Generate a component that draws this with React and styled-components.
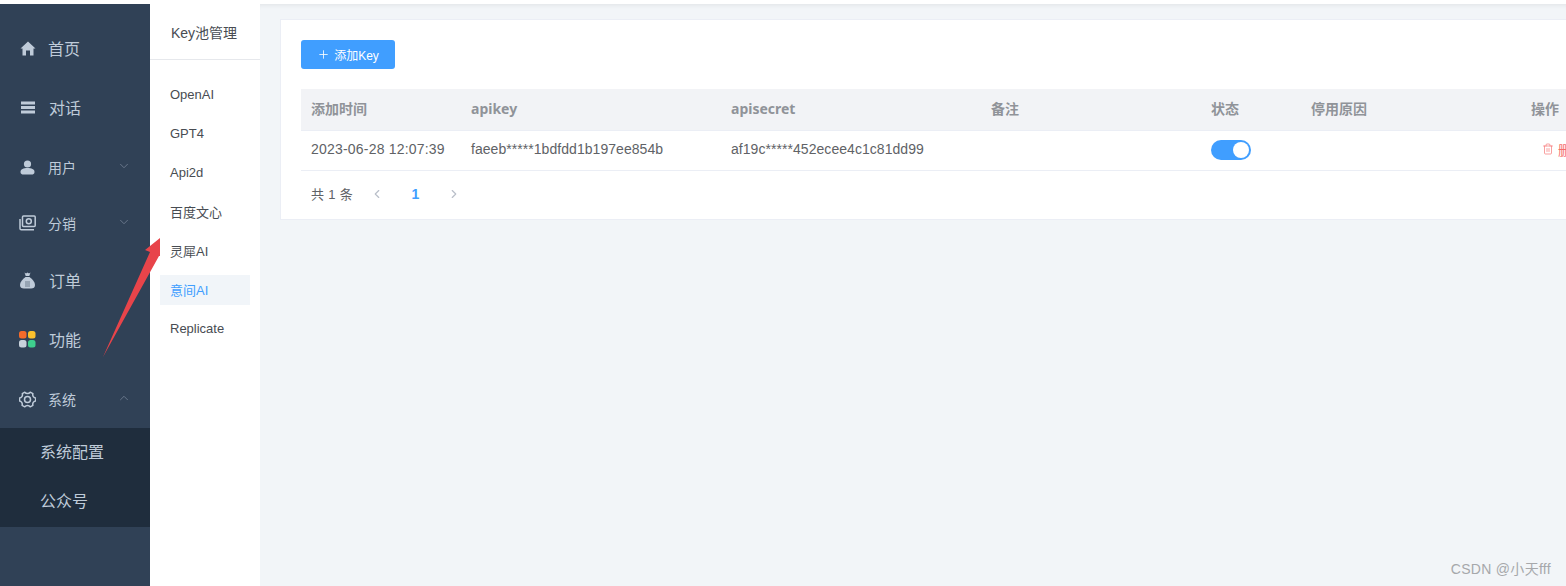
import React from 'react';
import styled, { createGlobalStyle } from 'styled-components';
import { Plus, ChevronLeft, ChevronRight, ChevronDown, ChevronUp, Trash2 } from 'lucide-react';

const GlobalStyle = createGlobalStyle`
  html, body {
    margin: 0;
    padding: 0;
    width: 1566px;
    height: 586px;
    overflow: hidden;
    background: #fff;
    font-family: "Liberation Sans", "Noto Sans CJK SC", sans-serif;
  }
  * { box-sizing: border-box; }
`;

const Page = styled.div`
  width: 1566px;
  height: 586px;
  padding-top: 4px;
  display: flex;
  position: relative;
  overflow: hidden;
  background: #fff;
`;

const Sidebar = styled.aside`
  width: 150px;
  flex-shrink: 0;
  padding-top: 14px;
  background: #304156;
  display: flex;
  flex-direction: column;
`;

const MenuRow = styled.div`
  height: ${({ $h }) => $h}px;
  padding: 0 0 ${({ $lift }) => $lift}px 19px;
  display: flex;
  align-items: center;
  color: #bfcbd9;
  font-size: ${({ $small }) => ($small ? 14 : 16)}px;
`;

const MenuIcon = styled.span`
  width: 17px;
  height: 17px;
  margin-right: ${({ $gap }) => $gap}px;
  display: flex;
  align-items: center;
  justify-content: center;
  flex-shrink: 0;
`;

const Caret = styled.span`
  margin-left: auto;
  margin-right: 19px;
  margin-top: -3px;
  display: flex;
  color: #6f7d90;
`;

const SubMenu = styled.div`
  background: #1f2d3d;
  display: flex;
  flex-direction: column;
`;

const SubRow = styled.div`
  height: 49.5px;
  padding: 0 0 4px 40px;
  display: flex;
  align-items: center;
  color: #bfcbd9;
  font-size: 16px;
`;

const Secondary = styled.nav`
  width: 110px;
  flex-shrink: 0;
  background: #fff;
`;

const SecondaryTitle = styled.div`
  height: 56px;
  padding-left: 21px;
  display: flex;
  align-items: center;
  color: #484c52;
  font-size: 14px;
  border-bottom: 1px solid #e6e8ec;
`;

const SecondaryList = styled.ul`
  list-style: none;
  margin: 0;
  padding: 20px 10px 0;
`;

const SecondaryItem = styled.li`
  height: 30px;
  margin-bottom: 9px;
  padding: 0 0 2px 10px;
  display: flex;
  align-items: center;
  font-size: 13px;
  color: ${({ $active }) => ($active ? '#409eff' : '#484c52')};
  background: ${({ $active }) => ($active ? '#f1f5f9' : 'transparent')};
`;

const Main = styled.main`
  flex: 1;
  min-width: 0;
  padding: 15px 0 0 20px;
  background: #f2f5f8;
  box-shadow: inset 0 5px 5px -4px rgba(0, 0, 0, 0.08);
`;

const Card = styled.section`
  width: 1500px;
  height: 201px;
  padding: 20px;
  background: #fff;
  border: 1px solid #ebeef5;
`;

const AddButton = styled.button`
  height: 29px;
  width: 94px;
  padding: 0;
  border: 0;
  border-radius: 3px;
  display: flex;
  align-items: center;
  justify-content: center;
  gap: 4px;
  background: #409eff;
  color: #fff;
  font-family: inherit;
  font-size: 12px;
`;

const Table = styled.table`
  margin-top: 20px;
  border-collapse: collapse;
  table-layout: fixed;
  width: 1460px;
`;

const HeadCell = styled.th`
  height: 41px;
  padding: 0 10px 2px;
  width: ${({ $w }) => $w}px;
  text-align: left;
  background: #f2f3f6;
  color: #909399;
  font-family: "Noto Sans", "Noto Sans CJK SC", sans-serif;
  font-size: 14px;
  font-weight: 700;
  border-bottom: 1px solid #ebeef5;
`;

const Cell = styled.td`
  height: 40px;
  padding: 0 10px 2px;
  color: #606266;
  font-size: 14px;
  letter-spacing: ${({ $spaced }) => ($spaced ? 0.2 : 0.05)}px;
  white-space: nowrap;
  overflow: hidden;
  border-bottom: 1px solid #ebeef5;
`;

const Switch = styled.span`
  width: 40px;
  height: 20px;
  padding: 2px;
  margin-top: 1px;
  border-radius: 10px;
  background: #409eff;
  display: flex;
  justify-content: flex-end;

  &:after {
    content: '';
    width: 16px;
    height: 16px;
    border-radius: 50%;
    background: #fff;
  }
`;

const DeleteLink = styled.span`
  margin-left: 11px;
  display: inline-flex;
  align-items: center;
  gap: 4px;
  color: #f56c6c;
  font-size: 13px;
`;

const Pager = styled.div`
  margin-top: 13px;
  display: flex;
  align-items: center;
  height: 20px;
  color: #606266;
  font-size: 13px;
  padding-left: 10px;
`;

const PagerTotal = styled.span`
  width: 59px;
  letter-spacing: 0.3px;
`;

const PagerArrow = styled.span`
  display: flex;
  color: #b9bfc9;
`;

const PagerNumber = styled.span`
  width: 63px;
  text-align: center;
  color: #409eff;
  font-size: 14px;
  font-weight: 700;
`;

const Watermark = styled.div`
  position: absolute;
  right: 15px;
  bottom: 8px;
  color: #a6a8ab;
  font-size: 14px;
  letter-spacing: 0.3px;
`;

const Arrow = styled.svg`
  position: absolute;
  left: 100px;
  top: 234px;
`;

const HomeIcon = () => (
  <svg width="16" height="15" viewBox="0 0 16 15">
    <path d="M8 0.5 L15.5 7.5 L13.5 7.5 L13.5 14.5 L10 14.5 L10 9.5 L6 9.5 L6 14.5 L2.5 14.5 L2.5 7.5 L0.5 7.5 Z" fill="#bfcbd9" />
  </svg>
);

const BarsIcon = () => (
  <svg width="14" height="13" viewBox="0 0 14 13">
    <path d="M0 0.5h14v3H0zM0 5h14v3H0zM0 9.5h14v3H0z" fill="#bfcbd9" />
  </svg>
);

const UserIcon = () => (
  <svg width="15" height="15" viewBox="0 0 15 15">
    <circle cx="7.5" cy="4" r="3.6" fill="#bfcbd9" />
    <path d="M0.5 12c0-3 3-4 7-4s7 1 7 4c0 2-1.5 2.5-3 2.5h-8c-1.500 0-3-.5-3-2.500z" fill="#bfcbd9" />
  </svg>
);

const CashIcon = () => (
  <svg width="17" height="16" viewBox="0 0 17 16" fill="none" stroke="#bfcbd9" strokeWidth="1.5">
    <rect x="3.500" y="1" width="12.700" height="10.500" rx="1" />
    <circle cx="9.800" cy="6.200" r="2.500" />
    <path d="M1 4v9.500c0 .8.500 1.300 1.300 1.300H15" />
  </svg>
);

const BagIcon = () => (
  <svg width="15" height="17" viewBox="0 0 15 17">
    <path d="M4.500 0.500l1.500 1 1.500-1 1.500 1 1.500-1-1.200 3.500H5.700z" fill="#bfcbd9" />
    <path d="M5.500 5h4c3 2 5.500 5 5.500 8 0 2.500-1.500 3.500-4 3.500H4c-2.500 0-4-1-4-3.500 0-3 2.500-6 5.500-8z" fill="#bfcbd9" />
    <path d="M5 10h5M5 12h5M5 14h5" stroke="#304156" strokeWidth="0.8" opacity="0.7" />
  </svg>
);

const TilesIcon = () => (
  <svg width="17" height="17" viewBox="0 0 17 17">
    <rect x="0" y="0" width="7.500" height="7.500" rx="2.500" fill="#f56b2a" />
    <rect x="9" y="0" width="7.500" height="7.500" rx="2.500" fill="#fbc02d" />
    <rect x="0" y="9" width="7.500" height="7.500" rx="2.500" fill="#c9d2dc" />
    <rect x="9" y="9" width="7.500" height="7.500" rx="2.500" fill="#3ecf8e" />
  </svg>
);

const GearIcon = () => (
  <svg width="17" height="17" viewBox="0 0 17 17" fill="none" stroke="#bfcbd9" strokeWidth="1.500" strokeLinejoin="round">
    <path d="M5.800 1.200c.7.900 1.600 1.300 2.700 1.300s2-.4 2.700-1.300l2.700 1.400c-.3 1.100-.2 2.100.4 3s1.400 1.400 2.400 1.500v2.800c-1 .1-1.800.6-2.400 1.500s-.7 1.900-.4 3l-2.700 1.400c-.7-.9-1.600-1.300-2.700-1.300s-2 .4-2.700 1.300l-2.700-1.400c.3-1.100.2-2.100-.4-3S1.500 10 .5 9.900V7.100c1-.1 1.800-.6 2.400-1.500s.7-1.900.4-3z" />
    <circle cx="8.500" cy="8.500" r="3" />
  </svg>
);

const navItems = [
  { label: '首页', h: 60, lift: 0, icon: <HomeIcon />, gap: 12 },
  { label: '对话', h: 60, lift: 2, icon: <BarsIcon />, gap: 13 },
  { label: '用户', h: 58, lift: 0, icon: <UserIcon />, gap: 12, small: true, caret: 'down' },
  { label: '分销', h: 56, lift: 2, icon: <CashIcon />, gap: 12, small: true, caret: 'down' },
  { label: '订单', h: 58, lift: 2, icon: <BagIcon />, gap: 13 },
  { label: '功能', h: 60, lift: 2, icon: <TilesIcon />, gap: 13 },
  { label: '系统', h: 58, lift: 0, icon: <GearIcon />, gap: 12, small: true, caret: 'up' },
];

const subItems = ['系统配置', '公众号'];
const keyPools = ['OpenAI', 'GPT4', 'Api2d', '百度文心', '灵犀AI', '意间AI', 'Replicate'];
const columns = [
  ['添加时间', 160],
  ['apikey', 260],
  ['apisecret', 260],
  ['备注', 220],
  ['状态', 100],
  ['停用原因', 220],
  ['操作', 240],
];

const App = () => {
  return (
    <Page>
      <GlobalStyle />
      <Sidebar>
        {navItems.map((item) => (
          <MenuRow key={item.label} $h={item.h} $lift={item.lift} $small={item.small}>
            <MenuIcon $gap={item.gap}>{item.icon}</MenuIcon>
            {item.label}
            {item.caret && (
              <Caret>
                {item.caret === 'up' ? (
                  <ChevronUp size={14} strokeWidth={1.500} />
                ) : (
                  <ChevronDown size={14} strokeWidth={1.500} />
                )}
              </Caret>
            )}
          </MenuRow>
        ))}
        <SubMenu>
          {subItems.map((label) => (
            <SubRow key={label}>{label}</SubRow>
          ))}
        </SubMenu>
      </Sidebar>

      <Secondary>
        <SecondaryTitle>Key池管理</SecondaryTitle>
        <SecondaryList>
          {keyPools.map((label) => (
            <SecondaryItem key={label} $active={label === '意间AI'}>
              {label}
            </SecondaryItem>
          ))}
        </SecondaryList>
      </Secondary>

      <Main>
        <Card>
          <AddButton>
            <Plus size={13} strokeWidth={1.500} />
            添加Key
          </AddButton>
          <Table>
            <thead>
              <tr>
                {columns.map(([label, w]) => (
                  <HeadCell key={label} $w={w}>
                    {label}
                  </HeadCell>
                ))}
              </tr>
            </thead>
            <tbody>
              <tr>
                <Cell $spaced>2023-06-28 12:07:39</Cell>
                <Cell>faeeb*****1bdfdd1b197ee854b</Cell>
                <Cell>af19c*****452ecee4c1c81dd99</Cell>
                <Cell />
                <Cell>
                  <Switch />
                </Cell>
                <Cell />
                <Cell>
                  <DeleteLink>
                    <Trash2 size={12} strokeWidth={1.300} />
                    删除
                  </DeleteLink>
                </Cell>
              </tr>
            </tbody>
          </Table>
          <Pager>
            <PagerTotal>共 1 条</PagerTotal>
            <PagerArrow>
              <ChevronLeft size={14} strokeWidth={2} />
            </PagerArrow>
            <PagerNumber>1</PagerNumber>
            <PagerArrow>
              <ChevronRight size={14} strokeWidth={2} />
            </PagerArrow>
          </Pager>
        </Card>
      </Main>

      <Arrow width="66" height="126" viewBox="0 0 66 126">
        <path d="M3 123 L50 18 L45 16 L60 4 L60 22 L59 22 Z" fill="#e8444a" />
      </Arrow>
      <Watermark>CSDN @小天fff</Watermark>
    </Page>
  );
};

export default App;
